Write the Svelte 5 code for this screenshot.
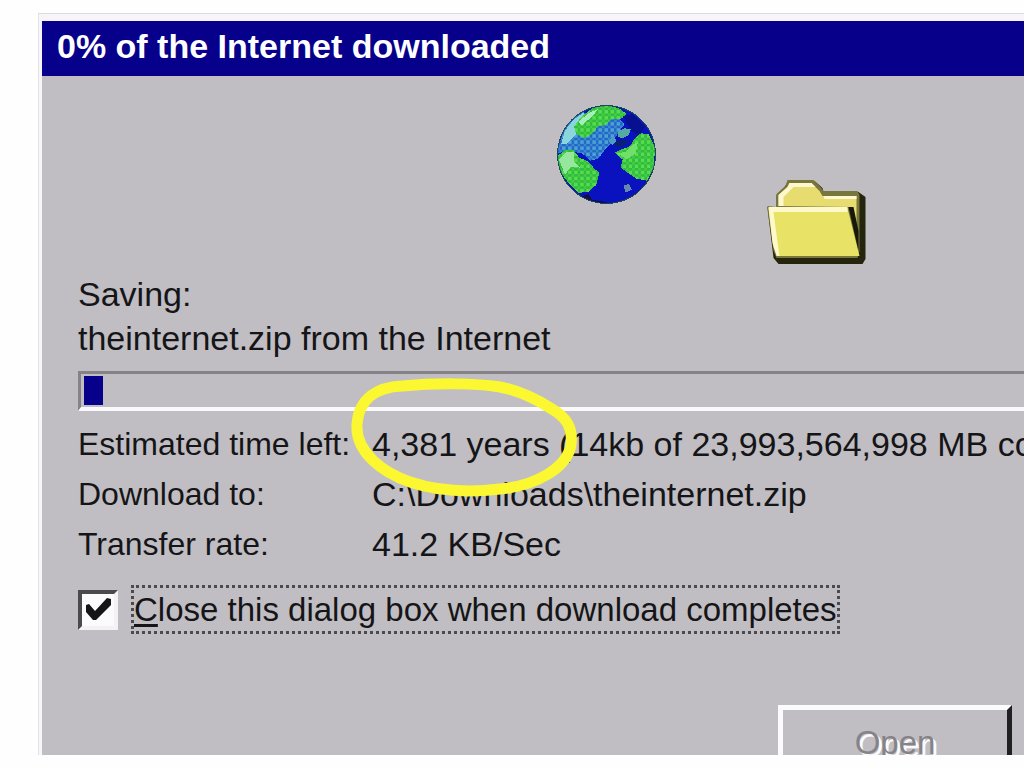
<script>
  let percent = 0;
  let fileName = "theinternet.zip";
  let closeWhenDone = true;
  let blocks = [1];
</script>

<svelte:head>
  <title>{percent}% of the Internet downloaded</title>
</svelte:head>

<main class="dialog">
  <header class="title-bar">
    <h1>{percent}% of the Internet downloaded</h1>
  </header>

  <div class="dialog-body">
    <div class="stage">
      <svg class="globe" viewBox="0 0 100 100" shape-rendering="crispEdges" aria-hidden="true">
        <defs>
          <pattern id="green-dither" width="6" height="6" patternUnits="userSpaceOnUse">
            <rect width="6" height="6" fill="#2fbd3c" />
            <rect width="3" height="3" fill="#5ada50" />
            <rect x="3" y="3" width="3" height="3" fill="#45cb48" />
          </pattern>
          <pattern id="blue-dither" width="6" height="6" patternUnits="userSpaceOnUse">
            <rect width="6" height="6" fill="#2468c6" />
            <rect width="3" height="3" fill="#4ba2d8" />
            <rect x="3" y="3" width="3" height="3" fill="#3a88d0" />
          </pattern>
          <clipPath id="globe-clip">
            <circle cx="50" cy="50" r="48" />
          </clipPath>
        </defs>
        <circle cx="50" cy="50" r="49" fill="#1d4a52" />
        <g clip-path="url(#globe-clip)">
          <rect width="100" height="100" fill="#0a12c0" />
          <path d="M0 50 L8 24 L24 8 L60 12 L68 20 L62 28 L56 38 L48 46 L42 54 L34 56 L26 49 L10 46Z" fill="url(#blue-dither)" />
          <path d="M5 40 L9 26 L18 15 L28 8 L25 24 L17 33 L10 40Z" fill="#8bd5dc" />
          <path d="M20 30 L18 22 L25 13 L36 4 L50 1 L62 4 L70 10 L64 15 L55 15 L49 21 L42 22 L36 29 L29 34Z" fill="url(#green-dither)" />
          <path d="M22 18 L32 9 L42 5 L36 12 L26 21Z" fill="#a5edba" />
          <path d="M66 12 L76 10 L88 22 L82 32 L74 26Z" fill="#07108e" />
          <path d="M1 52 L8 46 L17 45 L23 53 L32 57 L38 64 L43 68 L40 80 L32 87 L22 88 L12 78 L5 68Z" fill="url(#green-dither)" />
          <path d="M3 55 L11 47 L18 48 L18 57 L24 63 L15 62 L9 70Z" fill="#96e69d" />
          <path d="M58 48 L65 45 L73 42 L78 34 L84 29 L92 30 L98 43 L97 62 L90 76 L80 74 L71 68 L64 63 L66 55Z" fill="url(#green-dither)" />
          <path d="M61 49 L69 47 L76 40 L81 38 L79 49 L70 55Z" fill="#72df69" />
          <path d="M62 27 L68 24 L74 25 L72 31 L65 34 L61 32Z" fill="#55aba0" />
          <path d="M52 37 L57 31 L60 36 L56 41Z" fill="#4f9cc0" />
          <path d="M58 38 L64 35 L73 37 L66 42 L58 43Z" fill="#092078" />
          <path d="M67 81 L72 79 L75 85 L69 88Z" fill="#6488b2" />
          <path d="M72 93 Q90 82 97 64 L100 100 L60 100Z M24 92 L32 89 L36 95 L50 97 L50 100 L20 100Z" fill="#101044" />
        </g>
      </svg>

      <svg class="folder" viewBox="0 0 100 86" aria-hidden="true">
        <path d="M10 28 V16 L18 8 L22 2 H48 L56 9 L57 13 H92 L99 18 V80 L96 85 H12 L7 79 L2 37 L1 28Z" fill="#25250d" />
        <path d="M10 28 V15 L19 7 L21 1 H47 L55 9 L57 12 H91 L93 16 V72 L91 79 H10 L7 72 L1 31 V27Z" fill="#77763b" />
        <path d="M12 27 V16 L21 8 L23 4 H45 L53 12 L56 17 H90 V60 L84 28Z" fill="#e7dc6f" />
        <path d="M12 27 V16 L21 8 L23 4 H45 L49 8 H27 L17 18 V27Z M57 17 H90 V20 H58Z" fill="#fff8cf" />
        <path d="M2 29 H81 L93 77 H11 L7 68Z" fill="#e8e266" />
        <path d="M2 28 H81 V33 H7 L11 63 L13 77 H10 L6 64Z" fill="#fff8ca" />
        <path d="M82 28 H87 L92 52 V72Z" fill="#17170b" />
      </svg>
    </div>

    <p>Saving:</p>
    <p>{fileName} from the Internet</p>

    <div class="progress" role="progressbar" aria-label="Download progress" aria-valuenow={percent} aria-valuemin="0" aria-valuemax="100">
      {#each blocks as block}
        <span class="block"></span>
      {/each}
    </div>

    <dl class="details">
      <dt>Estimated time left:</dt>
      <dd>
        4,381 years (14kb of 23,993,564,998 MB copied)
        <svg class="marker" viewBox="0 0 230 120" aria-hidden="true">
          <path d="M7 46 C9 20 28 9 52 8 C85 5 125 5 150 9 C172 13 188 22 202 31 C217 40 223 50 221 66 C218 90 185 108 150 111 C116 115 84 112 60 104 C34 95 5 75 7 46Z" />
        </svg>
      </dd>
      <dt>Download to:</dt>
      <dd>C:\Downloads\{fileName}</dd>
      <dt>Transfer rate:</dt>
      <dd>41.2 KB/Sec</dd>
    </dl>

    <div class="option">
      <span class="check">
        <input id="close-when-done" type="checkbox" bind:checked={closeWhenDone} />
        {#if closeWhenDone}
          <svg viewBox="0 0 40 40" aria-hidden="true">
            <path d="M8 15 L11 14 L17 21 L29 8 L33 9 V15 L18 30 H15 L8 22Z" />
          </svg>
        {/if}
      </span>
      <label for="close-when-done"><u>C</u>lose this dialog box when download completes</label>
    </div>

    <footer class="actions">
      <button type="button" disabled>Open</button>
    </footer>
  </div>
</main>

<style>
:global(body) {
  margin: 0;
  background: #fefefe;
}

.dialog {
  margin: 13px 0 13px 38px;
  padding: 7px 0 0 3px;
  border-top: 1px solid #dedbdf;
  border-left: 1px solid #e5e2e7;
  background: #f7f4fa;
  color: #151518;
  font-family: "Liberation Sans", Arial, sans-serif;
  font-size: 34px;
  line-height: 44px;
  overflow: hidden;
}

.title-bar {
  height: 55px;
  padding-left: 15px;
  background: #07008a;
  color: #fff;
}

h1 {
  margin: 0;
  font-size: 34px;
  line-height: 50px;
  white-space: nowrap;
}

.dialog-body {
  padding-left: 36px;
  background: #c0bec2;
}

.stage {
  display: flex;
  align-items: flex-start;
  gap: 109px;
  height: 168px;
  padding: 28px 0 0 478px;
}

.globe {
  flex: none;
  width: 101px;
  height: 101px;
}

.folder {
  flex: none;
  width: 101px;
  height: 86px;
  margin-top: 75px;
}

p {
  margin: 0;
  white-space: nowrap;
}

.progress {
  display: flex;
  box-sizing: border-box;
  height: 40px;
  margin-top: 11px;
  padding: 2px 3px;
  border-top: 3px solid #858387;
  border-left: 3px solid #858387;
  border-bottom: 4px solid #faf9fb;
}

.block {
  width: 19px;
  background: #07008a;
}

.details {
  display: grid;
  grid-template-columns: 294px 1fr;
  margin: 8px 0 0;
  line-height: 50px;
  white-space: nowrap;
}

dt {
  font-size: 32px;
}

dd {
  position: relative;
  min-width: 0;
  margin: 0;
}

/* hand-drawn ring around the time left */
.marker {
  position: absolute;
  top: -41px;
  left: -22px;
  width: 230px;
  height: 120px;
  z-index: 1;
}

.marker path {
  fill: none;
  stroke: #fbf832;
  stroke-width: 11;
}

.option {
  display: flex;
  align-items: center;
  gap: 13px;
  margin-top: 16px;
}

.check {
  display: grid;
  width: 40px;
  height: 40px;
}

.check input,
.check svg {
  grid-area: 1 / 1;
  box-sizing: border-box;
  width: 40px;
  height: 40px;
  margin: 0;
}

.check input {
  appearance: none;
  border-style: solid;
  border-width: 4px;
  border-color: #4b494d #f4f2f5 #f4f2f5 #4b494d;
  background: #fbfafc;
}

.check svg {
  pointer-events: none;
  fill: #151518;
}

.option label {
  border: 3px dotted #4c4a4e;
  font-size: 33px;
  line-height: 43px;
  white-space: nowrap;
}

.option u {
  text-decoration-thickness: 3px;
  text-underline-offset: 3px;
}

.actions {
  display: flex;
  justify-content: flex-end;
  align-items: flex-start;
  height: 50px;
  margin-top: 71px;
  padding-right: 12px;
  overflow: hidden;
}

button {
  flex: none;
  box-sizing: border-box;
  width: 234px;
  height: 76px;
  padding: 0;
  border-style: solid;
  border-width: 5px;
  border-color: #fbfafc #202022 #202022 #fbfafc;
  background: #c0bec2;
  color: #858387;
  font-family: inherit;
  font-size: 33px;
  text-shadow: 3px 3px 0 #fbfafc;
}
</style>
